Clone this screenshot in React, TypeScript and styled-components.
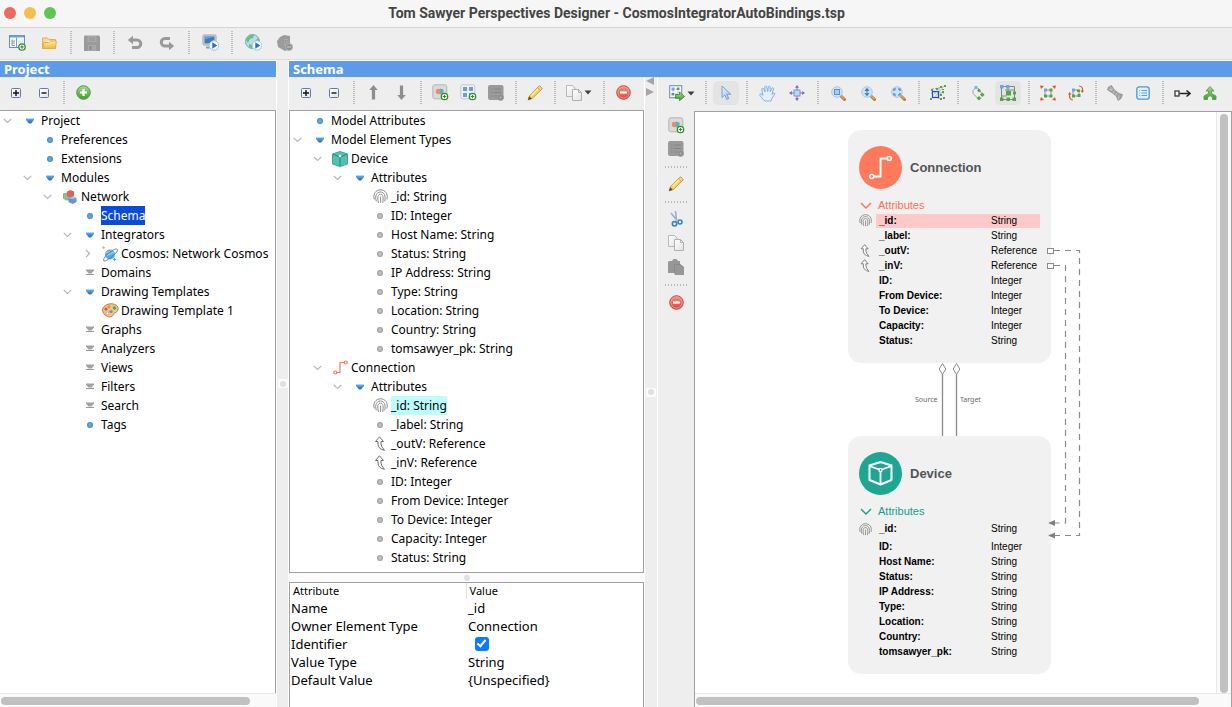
import React from 'react';
import styled, { createGlobalStyle, css } from 'styled-components';

const GlobalStyle = createGlobalStyle`
  *, *::before, *::after { box-sizing: border-box; }
  html, body { margin: 0; height: 100%; }
  body {
    background: #eeeeee;
    color: #000;
    font-family: "Noto Sans", "Open Sans", sans-serif;
    font-size: 13px;
    overflow: hidden;
  }
  button { font: inherit; color: inherit; border: 0; padding: 0; background: none; }
  svg { display: block; flex: none; }
`;

/* ---------- window frame ---------- */

const Window = styled.div`
  display: flex;
  flex-direction: column;
  height: 100vh;
`;

const TitleBar = styled.header`
  display: grid;
  grid-template-columns: 60px 1fr 62px;
  align-items: center;
  height: 28px;
  padding: 0 1px 2px 4px;
  background: #f6f6f6;
  border-bottom: 1px solid #d4d4d4;
`;

const Lights = styled.div`
  display: flex;
  gap: 8px;
`;

const Light = styled.button<{ $color: string }>`
  width: 12px;
  height: 12px;
  border-radius: 50%;
  background: ${p => p.$color};
`;

const Title = styled.h1`
  margin: 0;
  text-align: center;
  font: bold 14px/18px Roboto, "Liberation Sans", sans-serif;
  color: #444;
`;

const Toolbar = styled.div<{ $height: number; $pad: number }>`
  display: flex;
  align-items: center;
  flex: none;
  height: ${p => p.$height}px;
  padding: 0 0 2px ${p => p.$pad}px;
  overflow: hidden;
`;

const SideToolbar = styled.div`
  display: flex;
  flex-direction: column;
  align-items: center;
  padding-top: 2px;
`;

const ToolButton = styled.button<{ $w?: number }>`
  display: flex;
  align-items: center;
  justify-content: center;
  gap: 2px;
  flex: none;
  width: ${p => p.$w ?? 28}px;
  height: 24px;
`;

const ActiveFace = styled.span`
  display: flex;
  align-items: center;
  justify-content: center;
  width: 26px;
  height: 24px;
  border-radius: 5px;
  background: #e4e4e4;
`;

const Separator = styled.span<{ $across?: boolean }>`
  flex: none;
  ${p => p.$across
    ? css`
        width: 23px;
        height: 2px;
        margin: 5px 0 4px;
        background: repeating-linear-gradient(90deg, #b8b8b8 0 1px, transparent 1px 3px);
      `
    : css`
        width: 2px;
        height: 24px;
        margin: 0 4px 0 5px;
        background: repeating-linear-gradient(#bcbcbc 0 1px, transparent 1px 2px);
      `}
`;

const Workspace = styled.main`
  display: grid;
  grid-template-columns: 276px 13px 1fr;
  flex: 1;
  min-height: 0;
  border-top: 1px solid #dcdcdc;
`;

const Panel = styled.section`
  display: flex;
  flex-direction: column;
  min-width: 0;
  min-height: 0;
  border-top: 1px solid #fff;
`;

const PanelTitle = styled.h2`
  flex: none;
  margin: 0;
  padding: 0 4px;
  font-size: 13px;
  line-height: 16px;
  height: 16px;
  color: #fff;
  background: #5b9be9;
`;

const Splitter = styled.div`
  display: flex;
  flex-direction: column;
  align-items: center;
  justify-content: center;
  position: relative;
  border: solid #fff;
  border-width: 0 1px;
`;

const Grip = styled.span`
  display: flex;
  align-items: center;
  justify-content: center;
  width: 10px;
  height: 9px;
  background: #fbfbfb;

  &::after {
    content: '';
    width: 6px;
    height: 6px;
    border-radius: 50%;
    background: #e0e0e0;
  }
`;

const CollapseArrows = styled.div`
  position: absolute;
  top: 0;
  left: 0;
`;

const HSplitter = styled.div`
  display: flex;
  align-items: center;
  justify-content: center;
  flex: none;
  height: 9px;
  background: #fbfbfb;
`;

const SchemaBody = styled.div`
  display: grid;
  grid-template-columns: 355px 14px 1fr;
  flex: 1;
  min-height: 0;
`;

const Column = styled.div`
  display: flex;
  flex-direction: column;
  min-width: 0;
  min-height: 0;
`;

/* ---------- trees ---------- */

const TreeBox = styled.div<{ $framed?: boolean }>`
  flex: 1;
  min-height: 0;
  overflow: hidden;
  background: #fff;
  border: 1px solid #a0a0a0;
  ${p => !p.$framed && css`border-left: 0; border-bottom: 0;`}
`;

const TreeList = styled.ul`
  margin: 0;
  padding: 0;
  list-style: none;
  font-size: 12px;
`;

const TreeRow = styled.li<{ $level: number }>`
  display: grid;
  grid-template-columns: 19px 22px max-content;
  align-items: center;
  height: 19px;
  padding-left: ${p => p.$level * 20}px;
`;

const Twisty = styled.button`
  display: flex;
  justify-content: center;
  width: 15px;
`;

const IconCell = styled.span`
  display: flex;
  justify-content: center;
`;

const Label = styled.span<{ $mark?: 'selected' | 'linked' }>`
  line-height: 19px;
  ${p => p.$mark === 'selected' && css`background: #0a4bd8; color: #fff;`}
  ${p => p.$mark === 'linked' && css`background: #bdfdfd;`}
`;

/* ---------- scroll bars ---------- */

const HScroll = styled.div<{ $rest: number }>`
  flex: none;
  height: 14px;
  padding: 3px ${p => p.$rest}px 3px 1px;
  background: #fafafa;
  border-top: 1px solid #e8e8e8;
`;

const VScroll = styled.div`
  width: 15px;
  padding: 2px 3px 0;
  background: #fafafa;
  border-left: 1px solid #e8e8e8;
`;

const Thumb = styled.div<{ $vertical?: boolean }>`
  border-radius: 4px;
  background: #c1c1c1;
  ${p => p.$vertical
    ? css`width: 8px; height: 100%;`
    : css`height: 8px; width: 100%;`}
`;

/* ---------- property table ---------- */

const PropertyBox = styled.div`
  flex: none;
  height: 125px;
  background: #fff;
  border: 1px solid #a0a0a0;
  border-bottom: 0;
`;

const PropertyTable = styled.table`
  width: 100%;
  table-layout: fixed;
  border-collapse: collapse;

  th, td { padding: 0 1px; text-align: left; height: 18px; line-height: 18px; }
  th { padding: 0 3px; height: 16px; line-height: 16px; font-size: 11px; font-weight: normal; }
  th:first-child, td:first-child { width: 176px; }
  th + th { border-left: 1px solid #e0e0e0; }
  td + td { padding-left: 2px; }
`;

const Check = styled.input`
  appearance: none;
  display: block;
  width: 14px;
  height: 14px;
  margin: 0 0 0 7px;
  border-radius: 3px;
  background: #0a7bff;

  &:checked::after {
    content: '';
    display: block;
    width: 5px;
    height: 9px;
    margin: 1px 0 0 4px;
    border: solid #fff;
    border-width: 0 2px 2px 0;
    transform: rotate(40deg);
  }
`;

/* ---------- diagram ---------- */

const CanvasArea = styled.div`
  display: grid;
  grid-template-columns: 36px 1fr;
  flex: 1;
  min-height: 0;
`;

const CanvasFrame = styled.div`
  display: flex;
  flex-direction: column;
  min-width: 0;
  border: solid #a0a0a0;
  border-width: 1px 1px 0 1px;
`;

const CanvasRow = styled.div`
  display: grid;
  grid-template-columns: 1fr 15px;
  flex: 1;
  min-height: 0;
`;

const Canvas = styled.div`
  position: relative;
  overflow: hidden;
  background: #fff;
`;

const Edges = styled.svg`
  position: absolute;
  left: 0;
  top: 0;
`;

const Node = styled.article<{ $x: number; $y: number }>`
  position: absolute;
  left: ${p => p.$x}px;
  top: ${p => p.$y}px;
  width: 203px;
  padding: 16px 11px 15px;
  border-radius: 13px;
  background: #f1f1f1;
  font: 10px/15px "Liberation Sans", Arial, sans-serif;
`;

const NodeHead = styled.header`
  display: flex;
  align-items: center;
  gap: 8px;
  margin-bottom: 9px;
`;

const NodeTitle = styled.h3`
  margin: 0;
  font-size: 13px;
  line-height: 16px;
  color: #515556;
`;

const NodeToggle = styled.button<{ $color: string }>`
  display: flex;
  align-items: center;
  gap: 6px;
  height: 15px;
  padding-left: 1px;
  font-size: 11px;
  color: ${p => p.$color};
`;

const FieldRow = styled.div<{ $tall?: boolean }>`
  display: grid;
  grid-template-columns: 17px 1fr;
  align-items: center;
  height: ${p => (p.$tall ? 20 : 15)}px;
`;

const Field = styled.div<{ $marked?: boolean }>`
  display: grid;
  grid-template-columns: 112px 1fr;
  line-height: 14px;
  padding-left: 3px;
  ${p => p.$marked && css`background: #ffc9c9;`}
`;

const FieldName = styled.span`
  font-weight: bold;
`;

/* ---------- icons ---------- */

const Svg = ({ s = 16, h, children }: { s?: number; h?: number; children: React.ReactNode }) => (
  <svg width={s} height={h ?? s} viewBox={`0 0 ${s} ${h ?? s}`} fill="none" aria-hidden="true">{children}</svg>
);

const PaintStore = styled.svg`
  position: absolute;
`;

const SharedPaints = () => (
  <PaintStore width="0" height="0" aria-hidden="true">
    <defs>
      <linearGradient id="green" x2="0" y2="1"><stop stopColor="#a5dc8c" /><stop offset="1" stopColor="#3f9c35" /></linearGradient>
      <linearGradient id="red" x2="0" y2="1"><stop stopColor="#f79387" /><stop offset="1" stopColor="#e0403a" /></linearGradient>
      <linearGradient id="blue" x2="0" y2="1"><stop stopColor="#62b2f5" /><stop offset="1" stopColor="#1b62b8" /></linearGradient>
      <linearGradient id="gold" x2="0" y2="1"><stop stopColor="#fdf0b4" /><stop offset="1" stopColor="#f2b632" /></linearGradient>
      <linearGradient id="paper" x2="1" y2="1"><stop stopColor="#fff" /><stop offset="1" stopColor="#e2e2e2" /></linearGradient>
      <linearGradient id="sky" x2="1" y2="1"><stop stopColor="#e5f2fd" /><stop offset="1" stopColor="#8fc1f0" /></linearGradient>
      <radialGradient id="dotBlue"><stop stopColor="#6db4e8" /><stop offset="1" stopColor="#3b88cc" /></radialGradient>
      <radialGradient id="dotGray"><stop stopColor="#d0d0d0" /><stop offset="1" stopColor="#9a9a9a" /></radialGradient>
    </defs>
  </PaintStore>
);

const PlusBadge = ({ x = 13, y = 13 }: { x?: number; y?: number }) => (
  <g>
    <circle cx={x} cy={y} r="3.2" fill="#fff" stroke="#3a8a2c" strokeWidth="1.3" />
    <path d={`M${x - 1.8} ${y}h3.6M${x} ${y - 1.8}v3.6`} stroke="#3a8a2c" strokeWidth="1.2" />
  </g>
);

const PlayBadge = () => (
  <g>
    <circle cx="12" cy="11.5" r="4.8" fill="#f2f7fc" stroke="#a9c3e2" />
    <path d="M10.3 8.2v6.6l5-3.3z" fill="#2a6fc4" />
  </g>
);

const NewProjectIcon = () => (
  <Svg s={17}>
    <rect x=".5" y="1.5" width="15" height="12" fill="#f7fafe" stroke="#5c8fcf" />
    <path d="M1 2.5h14" stroke="#6ea3e0" strokeWidth="2" />
    <path d="M7.5 3.5v10" stroke="#6e9bd2" />
    <path d="M3 5.5v6M3 7h3M3 9h3M3 11.5h3" stroke="#8b98a8" />
    <path d="M9 5.5h5v6h-5z" fill="#e3ecf7" />
    <PlusBadge x={13} y={13} />
  </Svg>
);
const FolderIcon = () => (
  <Svg>
    <path d="M1.5 13V3h5l1.500 1.500h6.500V13z" fill="#f9d983" stroke="#e3b04e" />
    <path d="M4 5.500h9v3H4z" fill="#fff" stroke="#eddaa6" />
    <path d="M1.500 13.500l1.300-6h5l1.500-1.500h6L14.500 13.500z" fill="url(#gold)" stroke="#e3ad45" />
  </Svg>
);
const SaveIcon = () => (
  <Svg>
    <path d="M0 1.500Q0 .5 1 .5h14l1 1V16H0z" fill="#9a9a9a" />
    <rect x="3.500" y="1" width="9" height="6" fill="#a9a9a9" />
    <path d="M5 3h6M5 5h6" stroke="#929292" />
    <rect x="4" y="10" width="8" height="6" fill="#a8a8a8" />
    <rect x="5.500" y="11" width="2" height="4" fill="#8a8a8a" />
  </Svg>
);
const UndoIcon = ({ redo }: { redo?: boolean }) => (
  <Svg>
    <g transform={redo ? 'rotate(180 8 8)' : undefined}>
      <path d="M4 5h6a3.500 3.500 0 0 1 0 7.500H5" stroke="#999" strokeWidth="3" />
      <path d="M6 .800v8.400L.800 5z" fill="#999" />
    </g>
  </Svg>
);
const MonitorPlayIcon = () => (
  <Svg s={17}>
    <rect x="1" y="1" width="13" height="10" rx="1" fill="#d9d9d9" stroke="#a4a4a4" />
    <rect x="2.500" y="2.500" width="10" height="7" fill="#3c7bc4" />
    <path d="M2.500 2.500h10l-10 3z" fill="#6a9fd8" />
    <path d="M4 13.500h6" stroke="#9c9c9c" strokeWidth="2" />
    <PlayBadge />
  </Svg>
);
const GlobePlayIcon = () => (
  <Svg s={17}>
    <circle cx="7.500" cy="7.500" r="7" fill="#b5dff0" stroke="#6fb39c" />
    <path d="M1 6c1-4 5-6 8-5l-1 3-3 1-2 4zM9 8l4-4 2 3-4 3zM4 10l4 1-1 4-3-2z" fill="#6cc07a" />
    <PlayBadge />
  </Svg>
);
const ServerOffIcon = () => (
  <Svg>
    <path d="M0 6l3-4 4-2 6 1v13l-5 2-7-4z" fill="#9c9c9c" />
    <path d="M7 4.500h4M7 7h4M7 9.500h3" stroke="#acacac" />
    <circle cx="12" cy="12" r="3.500" fill="#8e8e8e" stroke="#b4b4b4" />
    <path d="M10 12h4" stroke="#c8c8c8" strokeWidth="1.200" />
  </Svg>
);
const ExpandIcon = ({ minus }: { minus?: boolean }) => (
  <Svg s={10}>
    <rect x=".5" y=".5" width="9" height="9" rx="1" fill="url(#paper)" stroke="#5d7ba6" />
    <path d={minus ? 'M2.500 5h5' : 'M2 5h6M5 2v6'} stroke="#111" strokeWidth="1.400" />
  </Svg>
);
const AddIcon = () => (
  <Svg s={15}>
    <circle cx="7.500" cy="7.500" r="6.800" fill="url(#green)" stroke="#4b9c46" />
    <path d="M4 7.500h7M7.500 4v7" stroke="#fff" strokeWidth="2.200" />
  </Svg>
);
const RemoveIcon = () => (
  <Svg s={15}>
    <circle cx="7.500" cy="7.500" r="6.800" fill="url(#red)" stroke="#c8463e" />
    <circle cx="7.500" cy="7.500" r="5.600" stroke="#f5a59b" strokeWidth=".8" />
    <path d="M4 7.500h7" stroke="#fff" strokeWidth="2.200" />
  </Svg>
);
const ArrowIcon = ({ down }: { down?: boolean }) => (
  <Svg s={9} h={15}>
    <path d="M4.500 0L8.700 5H6.100v9.500H2.900V5H.3z" fill="#8e8e8e" transform={down ? 'rotate(180 4.500 7.500)' : undefined} />
  </Svg>
);
const AddTypeIcon = () => (
  <Svg s={17}>
    <rect x=".8" y=".8" width="14" height="14" rx="2" fill="#dadada" stroke="#b4b4b4" />
    <circle cx="6.500" cy="7.500" r="2.700" fill="#f28573" />
    <path d="M8 4.500l3.500 1v4L8 10.500z" fill="#4dbcae" />
    <PlusBadge x={12.500} y={12.500} />
  </Svg>
);
const AddAttrIcon = () => (
  <Svg s={17}>
    <rect x=".8" y=".8" width="14" height="14" rx="2" fill="#eef3fb" stroke="#c0c6d0" />
    <path d="M3 3h4v4H3zM9 3h4v4H9zM3 9h4v4H3zM9 9h4v4H9z" fill="#6c9cdc" />
    <PlusBadge x={12.500} y={12.500} />
  </Svg>
);
const ListOffIcon = () => (
  <Svg>
    <rect x="0" y="0" width="15.500" height="15" rx="2" fill="#9a9a9a" />
    <path d="M3 4h1.500M6 4h7M3 7.500h1.500M6 7.500h7M3 11h1.500M6 11h4" stroke="#868686" strokeWidth="1.200" />
    <circle cx="12.500" cy="12.500" r="3" fill="#8a8a8a" stroke="#a2a2a2" strokeWidth=".8" />
    <path d="M11 12.500h3M12.500 11v3" stroke="#a8a8a8" />
  </Svg>
);
const PencilIcon = () => (
  <Svg>
    <path d="M1 15l1.500-4.500L11.500 1.500q1-1 2 0l1 1q1 1 0 2L5.500 13.500z" fill="#f8cf55" stroke="#c9963a" strokeWidth=".8" />
    <path d="M4.500 10.500l7-7" stroke="#fdeeb0" strokeWidth="1.500" />
    <path d="M11.500 1.500q1-1 2 0l1 1q1 1 0 2l-1 1-3-3z" fill="#f5cfa8" stroke="#c68a3a" strokeWidth=".7" />
    <path d="M1 15l1.200-3.800 2.600 2.600z" fill="#5b4630" />
  </Svg>
);
const CopyIcon = () => (
  <Svg>
    <path d="M.5.500h6l2.500 2.500v8.500H.5z" fill="url(#paper)" stroke="#b8b8b8" />
    <path d="M6.500 4.500h6l3 3v8h-9z" fill="url(#paper)" stroke="#b0b0b0" />
    <path d="M12.500 4.500v3h3" stroke="#b0b0b0" />
  </Svg>
);
const PasteOffIcon = () => (
  <Svg>
    <path d="M1 2h3l1.500-2h3L10 2h2v3l4 3v8H7l-1-2H0V3z" fill="#979797" />
    <path d="M6.500 14V5.500H12l3.500 3" stroke="#8a8a8a" />
  </Svg>
);
const CaretIcon = () => (
  <Svg s={8} h={5}><path d="M.5.500h7L4 4.500z" fill="#3f3f3f" /></Svg>
);
const ExportIcon = () => (
  <Svg>
    <rect x=".7" y=".7" width="12" height="12" fill="#fff" stroke="#7f98b4" strokeWidth="1.200" />
    <path d="M4 4h5v5H4z" stroke="#8aa2a0" strokeDasharray="1.500 1" />
    <path d="M2.500 2.500h3v3h-3z" fill="#6ba6e4" />
    <path d="M8 2.500h2.500V5H8zM2.500 8H5v2.500H2.500z" fill="#58a24c" />
    <path d="M6.500 9.500h4V7l5 4.500-5 4.200v-2.500h-4z" fill="url(#green)" stroke="#2f7d2a" strokeWidth=".8" />
  </Svg>
);
const PointerIcon = () => (
  <Svg s={14} h={16}>
    <path d="M3 1v11.500l2.800-2.500 2 4.500 2-1-2-4.200h4z" fill="url(#sky)" stroke="#6f9ad0" strokeWidth=".9" />
  </Svg>
);
const HandIcon = () => (
  <Svg s={17}>
    <path d="M5 15.500L1 10.500Q.3 9 1.500 8.700L4 10.300 2.700 4.500q0-1.300 1.200-1.200l.9.600L6 7 5.800 1.800Q6.300.5 7.500 1.200L8.700 6.500 9.500 1.700q.8-1.100 1.700-.2v5.200L13 3q1-.8 1.600.3L13 9.500l1-1.200q1.600-.8 2 .5L12.500 14l-.5 2H6z" fill="#e3f0fc" stroke="#78a9e6" strokeWidth=".9" />
  </Svg>
);
const FitIcon = () => (
  <Svg>
    <rect x="5" y="5" width="6" height="6" fill="#b9d6f5" stroke="#6c9cd8" />
    <path d="M8 5V1.500M8 11v3.500M5 8H1.500M11 8h3.500" stroke="#4b84cf" />
    <path d="M6 2.800L8 0l2 2.800zM6 13.200L8 16l2-2.800zM2.800 6L0 8l2.800 2zM13.200 6L16 8l-2.800 2z" fill="#a05a9c" />
  </Svg>
);
const ZoomIcon = ({ kind }: { kind: 'box' | 'arrows' | 'corners' }) => (
  <Svg s={15}>
    <path d="M9.500 9.500l4 4" stroke="#b8783c" strokeWidth="3" strokeLinecap="round" />
    <path d="M9.800 9.500l3.600 3.600" stroke="#e8a55c" strokeWidth="1.200" />
    <circle cx="6" cy="6" r="5.300" fill="#cbe2f8" stroke="#aac9e8" />
    {kind === 'box' && <rect x="3.500" y="3.500" width="5" height="5" fill="#a8cbee" stroke="#6590bf" />}
    {kind === 'arrows' && <path d="M6 1.800L8.500 5h-5zM6 10.200L8.500 7h-5zM5.500 4.500h1v3h-1z" fill="#3f78bd" />}
    {kind === 'corners' && <path d="M3 5V3h2M7 3h2v2M9 7v2H7M5 9H3V7" stroke="#3f7cc8" strokeWidth="1.200" />}
  </Svg>
);
const MarqueeNodesIcon = () => (
  <Svg>
    <path d="M2 4l12-2M1 8h13M4 13L14 1M9 3v11" stroke="#8bbd80" strokeDasharray="2 1" />
    <path d="M1 4h2v2H1zM6 3h2v2H6zM10 1h2v2h-2zM14 0h2v2h-2zM12 6h2v2h-2zM10 13h2v2h-2zM13 12h2v2h-2zM0 13h2v2H0zM12 4h2v1h-2zM10 9h2v2h-2z" fill="#57a34b" />
    <rect x="2.500" y="6.500" width="6" height="6" stroke="#2348d8" strokeWidth="1.200" />
  </Svg>
);
const HierarchyIcon = () => (
  <Svg s={13} h={16}>
    <path d="M4 2.500L1 5.500v3l5 5M6 3l4 6" stroke="#9aa79a" />
    <path d="M2.500 1h3v3h-3z" fill="#7cb2ea" />
    <path d="M7 3.500l2 2-2 2-2-2zM10.300 7.500l2.300 2.300-2.300 2.300L8 9.800zM7 11l2.300 2.300L7 15.600l-2.300-2.300z" fill="#57a34b" />
  </Svg>
);
const OrthogonalIcon = () => (
  <Svg>
    <path d="M1.500 1.500h13v13h-13zM1.500 11h5M8 2v4M5 5h9" stroke="#7c8a7c" />
    <path d="M0 0h3.500v3.500H0zM6 0h3.500v3.500H6z" fill="#6aa7e6" />
    <path d="M0 12.500h3.500V16H0zM6.500 12.500H10V16H6.500zM12.500 12.500H16V16h-3.500zM6 6h5v4.500H6zM13 6.500h3v3h-3z" fill="#57a34b" />
  </Svg>
);
const SpreadIcon = () => (
  <Svg>
    <path d="M5 5h6v6H5z" stroke="#8a978a" />
    <path d="M4 3.500h3v3H4z" fill="#6aa7e6" />
    <path d="M9.500 3.500h3v3h-3zM4 9.500h3v3H4zM9.500 9.500h3v3h-3z" fill="#57a34b" />
    <path d="M0 .500l4 .500-3 3zM16 .500l-4 .500 3 3zM0 15.500l4-.500-3-3zM16 15.500l-4-.500 3-3z" fill="#d9582c" />
  </Svg>
);
const RotateIcon = () => (
  <Svg>
    <path d="M5 5h6v6H5z" stroke="#8a978a" />
    <path d="M4 3.500h3v3H4z" fill="#6aa7e6" />
    <path d="M9 4.500h3v2.500H9zM4 9.500h3v3H4zM9.500 9h3v3h-3z" fill="#57a34b" />
    <path d="M11 1q4 0 3.500 5M5 15q-4 0-3.500-6" stroke="#d9582c" strokeWidth="1.200" />
    <path d="M12.500 5.500H16L14.300 8zM0 9.500h3.500L1.700 7z" fill="#d9582c" />
  </Svg>
);
const LinkOffIcon = () => (
  <Svg>
    <path d="M.500 5L1.500 2l3-1.500L7.500 5l4.500 3.500 3.500 1-1.500 4-3 2-1.500-4L5.500 8z" fill="#a2a2a2" stroke="#808080" strokeWidth=".6" />
    <path d="M3.500 2l1 4M7.500 5.500l-1.500 3M10 8l-1.500 2.500M12 10.500l-1 4M1.500 5l5-1" stroke="#cdcdcd" strokeWidth=".8" />
  </Svg>
);
const ListIcon = () => (
  <Svg s={14}>
    <rect x=".8" y=".8" width="12.400" height="12.400" rx="2.500" fill="#e0f0fc" stroke="#4a9ad4" strokeWidth="1.300" />
    <path d="M3.200 4.500h1M3.200 7h1M3.200 9.500h1M5.500 4.500H11M5.500 7H11M5.500 9.500H11" stroke="#5ba3da" strokeWidth="1.200" />
  </Svg>
);
const EdgeIcon = () => (
  <Svg s={17}>
    <rect x="1" y="6" width="4" height="5" fill="#fff" stroke="#3a3a3a" strokeWidth="1.300" />
    <path d="M5.500 8.500H15" stroke="#222" strokeWidth="1.500" />
    <path d="M12.500 5.500l3.500 3-3.500 3" stroke="#222" strokeWidth="1.500" />
  </Svg>
);
const MergeIcon = () => (
  <Svg s={14}>
    <path d="M7 .500L11 5H8.500v2.500L13 10v3.500h-3.500v-2L7 9.500l-2.500 2v2H1V10l4.500-2.500V5H3z" fill="url(#green)" stroke="#5a9e52" strokeWidth=".9" />
  </Svg>
);
const ScissorsIcon = () => (
  <Svg>
    <path d="M7.500 0l1 9.500M3 2l6 7.500" stroke="#8fb4dc" strokeWidth="1.600" />
    <circle cx="6.500" cy="12.800" r="2.200" stroke="#3f7fc6" strokeWidth="1.600" />
    <circle cx="12" cy="11" r="2" stroke="#3f7fc6" strokeWidth="1.600" />
  </Svg>
);

const ChevronDown = ({ color = '#b8b8b8' }: { color?: string }) => (
  <Svg s={9} h={6}><path d="M.8 1l3.700 3.500L8.200 1" stroke={color} strokeWidth="1.200" /></Svg>
);
const ChevronRight = () => (
  <Svg s={6} h={9}><path d="M1 .8l3.500 3.700L1 8.200" stroke="#b0b0b0" strokeWidth="1.200" /></Svg>
);
const BlueDot = () => <Svg s={6}><circle cx="3" cy="3" r="3" fill="url(#dotBlue)" /></Svg>;
const GrayDot = () => <Svg s={6}><circle cx="3" cy="3" r="3" fill="url(#dotGray)" /></Svg>;
const FolderMark = () => <Svg s={8} h={6}><path d="M0 .500h8v1.500L5 5.500H3L0 2z" fill="url(#blue)" /></Svg>;
const EmptyMark = () => (
  <Svg s={8} h={7}><path d="M0 .500h8v1L5.500 4.500h-3L0 1.500z" fill="#a2a2a2" /><path d="M0 5.500h8" stroke="#969696" /></Svg>
);
const NetworkIcon = () => (
  <Svg s={14}>
    <path d="M0 4l4-1 3 2v5l-4 0-3-2z" fill="#8fc08a" stroke="#6a9a68" strokeWidth=".6" />
    <path d="M4 1.500L7.500 0 11 1.500v4.500L8 8 4 6z" fill="#e2605a" />
    <path d="M5.500 8L9.500 6.500l4 1.500v4l-4 2-4-2z" fill="#6a94cc" />
    <path d="M5.500 8l4 1.200 4-1.200-4-1.200z" fill="#a0c2ec" />
  </Svg>
);
const PlanetIcon = () => (
  <Svg>
    <circle cx="8" cy="8.500" r="5" fill="#5aa8e0" />
    <path d="M4 7l7-3M4 10l8-4" stroke="#a6d6f4" />
    <path d="M2 15c-2-1 3-7 6-9s7-4 7.500-2.500-3 5.500-6 7.500-6 4.500-7.500 4z" stroke="#3d7cc0" strokeWidth=".9" />
    <path d="M1.500 0v3M0 1.500h3" stroke="#c9d24a" />
    <path d="M12.500 12v3M11 13.500h3" stroke="#5aa8e0" />
  </Svg>
);
const PaletteIcon = () => (
  <Svg s={17} h={15}>
    <path d="M1 5C3 1 10-.5 14 2c3 2 2.500 5.500.5 7-2 1.200-3 1-3.500 3-.8 2.500-5 2.500-8 0C.8 10 0 7.500 1 5z" fill="#f3c28a" stroke="#b87436" strokeWidth=".9" />
    <circle cx="4" cy="6" r="1.600" fill="#e2504a" />
    <circle cx="7" cy="3.800" r="1.500" fill="#e8923c" />
    <circle cx="12.500" cy="5" r="1.700" fill="#4cae5c" />
    <circle cx="9" cy="8.500" r="1.600" fill="#5a96dc" />
    <circle cx="5.500" cy="10.500" r="1.400" fill="#fff" stroke="#c58a50" strokeWidth=".6" />
  </Svg>
);
const BoxIcon = () => (
  <Svg>
    <path d="M8 .500l7.500 2.500v10L8 15.500.5 13V3z" fill="#52c2ac" stroke="#3aa893" />
    <path d="M.8 3.200L8 6l7.200-2.800M8 6v9.500" stroke="#238673" />
    <circle cx="8" cy="5" r="1.300" fill="#dff5f0" />
  </Svg>
);
const WireIcon = () => (
  <Svg s={15}>
    <path d="M3.500 12.500h3.500v-10h4.500" stroke="#f07a64" strokeWidth="1.200" />
    <circle cx="2.200" cy="12.500" r="1.500" fill="#fff" stroke="#f07a64" strokeWidth="1.200" />
    <circle cx="12.700" cy="2.500" r="1.500" fill="#fff" stroke="#f07a64" strokeWidth="1.200" />
  </Svg>
);
const FingerprintIcon = ({ size = 15 }: { size?: number }) => (
  <svg width={size} height={size} viewBox="0 0 15 15" fill="none" stroke="#7c7c7c" strokeWidth=".9" strokeLinecap="round" aria-hidden="true">
    <path d="M1.200 10C-.5 5 3 .800 7.500 .800s8 4 6.500 9.200" />
    <path d="M3.200 12C1.500 6.500 4 3 7.500 3s5.500 3.500 4.300 9" />
    <path d="M5.400 13.500C4 8.500 5 5.200 7.500 5.200s3.200 3 2.300 8.300" />
    <path d="M7.600 8v5.500" />
  </svg>
);
const ReferenceIcon = ({ size = 15 }: { size?: number }) => (
  <svg width={size} height={size} viewBox="0 0 15 15" fill="#fff" stroke="#6f6f6f" strokeWidth="1" strokeLinejoin="round" aria-hidden="true">
    <path d="M6.500 .800L2.500 5.500H5V8q0 5 6.500 6.300Q8 10.500 8 8V5.500h2.500z" />
  </svg>
);
const WireBadge = () => (
  <Svg s={43}>
    <circle cx="21.500" cy="21.500" r="21.500" fill="#ff7a5c" />
    <path d="M15 30.500h6.500v-18H28" stroke="#fff" strokeWidth="2" />
    <circle cx="12.800" cy="30.500" r="2" stroke="#fff" strokeWidth="1.500" />
    <circle cx="30.300" cy="12.500" r="2" stroke="#fff" strokeWidth="1.500" />
  </Svg>
);
const BoxBadge = () => (
  <Svg s={43}>
    <circle cx="21.500" cy="21.500" r="21.500" fill="#1ea693" />
    <path d="M21.500 10L32.500 13.500v14.500L21.500 32.500 10.500 28V13.500z" stroke="#fff" strokeWidth="2" strokeLinejoin="round" />
    <path d="M10.500 14l9.500 3.500M32.500 14L23 17.500M21.500 20v12" stroke="#fff" strokeWidth="1.800" />
    <circle cx="21.500" cy="18" r="1.600" stroke="#fff" strokeWidth="1.300" />
  </Svg>
);

/* ---------- data ---------- */

type Item = {
  text: string;
  level: number;
  icon: React.ReactNode;
  open?: boolean;
  mark?: 'selected' | 'linked';
};

const folder = (text: string, level: number): Item => ({ text, level, icon: <FolderMark />, open: true });
const empty = (text: string): Item => ({ text, level: 3, icon: <EmptyMark /> });
const attr = (text: string): Item => ({ text, level: 3, icon: <GrayDot /> });

const projectItems: Item[] = [
  folder('Project', 0),
  { text: 'Preferences', level: 1, icon: <BlueDot /> },
  { text: 'Extensions', level: 1, icon: <BlueDot /> },
  folder('Modules', 1),
  { text: 'Network', level: 2, icon: <NetworkIcon />, open: true },
  { text: 'Schema', level: 3, icon: <BlueDot />, mark: 'selected' },
  folder('Integrators', 3),
  { text: 'Cosmos: Network Cosmos', level: 4, icon: <PlanetIcon />, open: false },
  empty('Domains'),
  folder('Drawing Templates', 3),
  { text: 'Drawing Template 1', level: 4, icon: <PaletteIcon /> },
  empty('Graphs'),
  empty('Analyzers'),
  empty('Views'),
  empty('Filters'),
  empty('Search'),
  { text: 'Tags', level: 3, icon: <BlueDot /> },
];

const schemaItems: Item[] = [
  { text: 'Model Attributes', level: 0, icon: <BlueDot /> },
  folder('Model Element Types', 0),
  { text: 'Device', level: 1, icon: <BoxIcon />, open: true },
  folder('Attributes', 2),
  { text: '_id: String', level: 3, icon: <FingerprintIcon /> },
  attr('ID: Integer'),
  attr('Host Name: String'),
  attr('Status: String'),
  attr('IP Address: String'),
  attr('Type: String'),
  attr('Location: String'),
  attr('Country: String'),
  attr('tomsawyer_pk: String'),
  { text: 'Connection', level: 1, icon: <WireIcon />, open: true },
  folder('Attributes', 2),
  { text: '_id: String', level: 3, icon: <FingerprintIcon />, mark: 'linked' },
  attr('_label: String'),
  { text: '_outV: Reference', level: 3, icon: <ReferenceIcon /> },
  { text: '_inV: Reference', level: 3, icon: <ReferenceIcon /> },
  attr('ID: Integer'),
  attr('From Device: Integer'),
  attr('To Device: Integer'),
  attr('Capacity: Integer'),
  attr('Status: String'),
];

type FieldData = { name: string; type: string; icon?: React.ReactNode; marked?: boolean; tall?: boolean };

const connectionFields: FieldData[] = [
  { name: '_id:', type: 'String', icon: <FingerprintIcon size={13} />, marked: true },
  { name: '_label:', type: 'String' },
  { name: '_outV:', type: 'Reference', icon: <ReferenceIcon size={13} /> },
  { name: '_inV:', type: 'Reference', icon: <ReferenceIcon size={13} /> },
  { name: 'ID:', type: 'Integer' },
  { name: 'From Device:', type: 'Integer' },
  { name: 'To Device:', type: 'Integer' },
  { name: 'Capacity:', type: 'Integer' },
  { name: 'Status:', type: 'String' },
];

const deviceFields: FieldData[] = [
  { name: '_id:', type: 'String', icon: <FingerprintIcon size={13} />, tall: true },
  { name: 'ID:', type: 'Integer' },
  { name: 'Host Name:', type: 'String' },
  { name: 'Status:', type: 'String' },
  { name: 'IP Address:', type: 'String' },
  { name: 'Type:', type: 'String' },
  { name: 'Location:', type: 'String' },
  { name: 'Country:', type: 'String' },
  { name: 'tomsawyer_pk:', type: 'String' },
];

/* ---------- composed parts ---------- */

const Tree = ({ items, name }: { items: Item[]; name: string }) => (
  <TreeList role="tree" aria-label={name}>
    {items.map((item, i) => (
      <TreeRow key={i} role="treeitem" aria-level={item.level + 1} aria-selected={!!item.mark} $level={item.level}>
        {item.open === undefined
          ? <span />
          : <Twisty aria-label={`Toggle ${item.text}`}>{item.open ? <ChevronDown /> : <ChevronRight />}</Twisty>}
        <IconCell>{item.icon}</IconCell>
        <Label $mark={item.mark}>{item.text}</Label>
      </TreeRow>
    ))}
  </TreeList>
);

const Tool = ({ name, w, active, children }: { name: string; w?: number; active?: boolean; children: React.ReactNode }) => (
  <ToolButton aria-label={name} $w={w}>{active ? <ActiveFace>{children}</ActiveFace> : children}</ToolButton>
);

const EntityNode = ({ x, y, title, color, badge, fields }: {
  x: number; y: number; title: string; color: string; badge: React.ReactNode; fields: FieldData[];
}) => (
  <Node $x={x} $y={y}>
    <NodeHead>{badge}<NodeTitle>{title}</NodeTitle></NodeHead>
    <NodeToggle $color={color}>
      <Svg s={12} h={8}><path d="M1 1l5 5 5-5" stroke={color} strokeWidth="1.400" /></Svg>
      Attributes
    </NodeToggle>
    {fields.map(f => (
      <FieldRow key={f.name} $tall={f.tall}>
        <span>{f.icon}</span>
        <Field $marked={f.marked}><FieldName>{f.name}</FieldName><span>{f.type}</span></Field>
      </FieldRow>
    ))}
  </Node>
);

const DiagramEdges = () => (
  <Edges width="400" height="570" viewBox="0 0 400 570" fill="none" stroke="#8a8a8a" aria-hidden="true">
    <path d="M247.500 262v62M261.500 262v62" strokeWidth="1.300" />
    <path d="M247.500 251.500l3.300 5.500-3.300 5.500-3.300-5.500zM261.500 251.500l3.300 5.500-3.300 5.500-3.300-5.500z" fill="#fff" />
    <path d="M359 138.500h25.500v285H359M359 153.500h11.500v257.500H359" strokeDasharray="6 5" strokeWidth="1.200" />
    <rect x="352.500" y="136.500" width="6" height="5" fill="#fff" />
    <rect x="352.500" y="151.500" width="6" height="5" fill="#fff" />
    <path d="M353 411l7-3v6zM353 423.500l7-3v6z" fill="#808080" stroke="none" />
    <g fill="#666" stroke="none" fontFamily="'Noto Sans', sans-serif" fontSize="7">
      <text x="220" y="290">Source</text>
      <text x="265" y="290">Target</text>
    </g>
  </Edges>
);

export default function App() {
  return (
    <Window>
      <GlobalStyle />
      <SharedPaints />
      <TitleBar>
        <Lights>
          <Light $color="#ed6a5e" aria-label="Close" />
          <Light $color="#f5bf4f" aria-label="Minimize" />
          <Light $color="#61c554" aria-label="Zoom" />
        </Lights>
        <Title>Tom Sawyer Perspectives Designer - CosmosIntegratorAutoBindings.tsp</Title>
        <span />
      </TitleBar>
      <Toolbar $height={31} $pad={1}>
        <Tool name="New project" w={32}><NewProjectIcon /></Tool>
        <Tool name="Open" w={32}><FolderIcon /></Tool>
        <Separator />
        <Tool name="Save" w={32}><SaveIcon /></Tool>
        <Separator />
        <Tool name="Undo" w={32}><UndoIcon /></Tool>
        <Tool name="Redo" w={32}><UndoIcon redo /></Tool>
        <Separator />
        <Tool name="Preview on desktop" w={32}><MonitorPlayIcon /></Tool>
        <Separator />
        <Tool name="Preview on web" w={32}><GlobePlayIcon /></Tool>
        <Tool name="Stop server" w={32}><ServerOffIcon /></Tool>
      </Toolbar>
      <Workspace>
        <Panel>
          <PanelTitle>Project</PanelTitle>
          <Toolbar $height={33} $pad={2}>
            <Tool name="Expand all"><ExpandIcon /></Tool>
            <Tool name="Collapse all"><ExpandIcon minus /></Tool>
            <Separator />
            <Tool name="Add"><AddIcon /></Tool>
          </Toolbar>
          <TreeBox><Tree items={projectItems} name="Project" /></TreeBox>
          <HScroll $rest={26}><Thumb /></HScroll>
        </Panel>
        <Splitter><Grip /></Splitter>
        <Panel>
          <PanelTitle>Schema</PanelTitle>
          <SchemaBody>
            <Column>
              <Toolbar $height={33} $pad={3}>
                <Tool name="Expand all"><ExpandIcon /></Tool>
                <Tool name="Collapse all"><ExpandIcon minus /></Tool>
                <Separator />
                <Tool name="Move up"><ArrowIcon /></Tool>
                <Tool name="Move down"><ArrowIcon down /></Tool>
                <Separator />
                <Tool name="Add element type"><AddTypeIcon /></Tool>
                <Tool name="Add attribute group"><AddAttrIcon /></Tool>
                <Tool name="Add attribute"><ListOffIcon /></Tool>
                <Separator />
                <Tool name="Edit"><PencilIcon /></Tool>
                <Separator />
                <Tool name="Copy" w={38}><CopyIcon /><CaretIcon /></Tool>
                <Separator />
                <Tool name="Delete"><RemoveIcon /></Tool>
              </Toolbar>
              <TreeBox $framed><Tree items={schemaItems} name="Schema" /></TreeBox>
              <HSplitter><Grip /></HSplitter>
              <PropertyBox>
                <PropertyTable>
                  <thead><tr><th>Attribute</th><th>Value</th></tr></thead>
                  <tbody>
                    <tr><td>Name</td><td>_id</td></tr>
                    <tr><td>Owner Element Type</td><td>Connection</td></tr>
                    <tr>
                      <td><label htmlFor="identifier">Identifier</label></td>
                      <td><Check id="identifier" type="checkbox" defaultChecked /></td>
                    </tr>
                    <tr><td>Value Type</td><td>String</td></tr>
                    <tr><td>Default Value</td><td>{'{Unspecified}'}</td></tr>
                  </tbody>
                </PropertyTable>
              </PropertyBox>
            </Column>
            <Splitter>
              <CollapseArrows>
                <Svg s={12} h={22}><path d="M9 0v8L1 4zM1 11v8l8-4z" fill="#a6a6a6" /></Svg>
              </CollapseArrows>
              <Grip />
            </Splitter>
            <Column>
              <Toolbar $height={34} $pad={6}>
                <Tool name="Export drawing" w={36}><ExportIcon /><CaretIcon /></Tool>
                <Separator />
                <Tool name="Select" w={30} active><PointerIcon /></Tool>
                <Separator />
                <Tool name="Pan" w={30}><HandIcon /></Tool>
                <Tool name="Fit in window" w={30}><FitIcon /></Tool>
                <Separator />
                <Tool name="Marquee zoom" w={30}><ZoomIcon kind="box" /></Tool>
                <Tool name="Interactive zoom" w={30}><ZoomIcon kind="arrows" /></Tool>
                <Tool name="Zoom to fit" w={30}><ZoomIcon kind="corners" /></Tool>
                <Separator />
                <Tool name="Overview"><MarqueeNodesIcon /></Tool>
                <Separator />
                <Tool name="Hierarchical layout" w={30}><HierarchyIcon /></Tool>
                <Tool name="Orthogonal layout" w={30} active><OrthogonalIcon /></Tool>
                <Separator />
                <Tool name="Spread"><SpreadIcon /></Tool>
                <Tool name="Rotate"><RotateIcon /></Tool>
                <Separator />
                <Tool name="Bundle edges"><LinkOffIcon /></Tool>
                <Tool name="Show attributes"><ListIcon /></Tool>
                <Separator />
                <Tool name="Create edge"><EdgeIcon /></Tool>
                <Tool name="Create inheritance"><MergeIcon /></Tool>
              </Toolbar>
              <CanvasArea>
                <SideToolbar>
                  <Tool name="Add element type"><AddTypeIcon /></Tool>
                  <Tool name="Add attribute"><ListOffIcon /></Tool>
                  <Separator $across />
                  <Tool name="Edit"><PencilIcon /></Tool>
                  <Separator $across />
                  <Tool name="Cut"><ScissorsIcon /></Tool>
                  <Tool name="Copy"><CopyIcon /></Tool>
                  <Tool name="Paste"><PasteOffIcon /></Tool>
                  <Separator $across />
                  <Tool name="Delete"><RemoveIcon /></Tool>
                </SideToolbar>
                <CanvasFrame>
                  <CanvasRow>
                    <Canvas>
                      <EntityNode x={153} y={18} title="Connection" color="#ff6f52" badge={<WireBadge />} fields={connectionFields} />
                      <EntityNode x={153} y={324} title="Device" color="#12a08a" badge={<BoxBadge />} fields={deviceFields} />
                      <DiagramEdges />
                    </Canvas>
                    <VScroll><Thumb $vertical /></VScroll>
                  </CanvasRow>
                  <HScroll $rest={32}><Thumb /></HScroll>
                </CanvasFrame>
              </CanvasArea>
            </Column>
          </SchemaBody>
        </Panel>
      </Workspace>
    </Window>
  );
}
